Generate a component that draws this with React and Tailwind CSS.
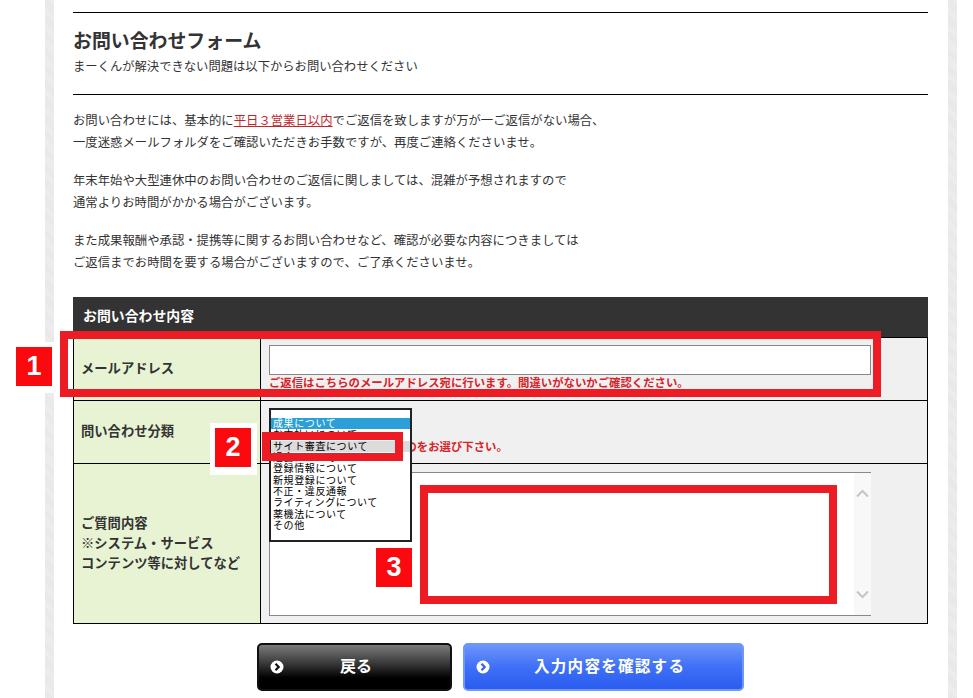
const categories = [
  { label: '成果について', active: true },
  { label: 'お支払いについて' },
  { label: 'サイト審査について', hover: true },
  { label: '退会について' },
  { label: '登録情報について' },
  { label: '新規登録について' },
  { label: '不正・違反通報' },
  { label: 'ライティングについて' },
  { label: '薬機法について' },
  { label: 'その他' },
]

const stripe = 'w-[9px] shrink-0 bg-[repeating-linear-gradient(45deg,#e6e6e6_0_1px,#efefef_1px_2px)]'

function Badge({ n, className }) {
  return (
    <div className={`absolute z-30 flex w-[36px] h-[39px] items-center justify-center bg-[#fa0a0f] text-[27px] font-bold text-white [font-family:'Liberation_Sans',sans-serif] ${className}`}>
      {n}
    </div>
  )
}

function ArrowIcon({ color }) {
  return (
    <svg width="14" height="14" viewBox="0 0 14 14" className="shrink-0">
      <circle cx="7" cy="7" r="6.5" fill="#fff" />
      <path d="M5.5 3.8 L8.7 7 L5.5 10.2" fill="none" stroke={color} strokeWidth="2.2" />
    </svg>
  )
}

export default function App() {
  return (
    <div className="relative h-[698px] w-[973px] overflow-hidden bg-white text-[#333] [font-family:'Liberation_Sans','Noto_Sans_CJK_JP',sans-serif]">
      <div className="ml-[45px] flex h-full w-[912px]">
        <div className={stripe} />
        <div className="flex-1 pl-[19px] pr-[20px] pt-[12px]">
          <div className="border-y border-black pt-[15px] pb-[16px]">
            <h2 className="text-[18.9px] font-bold leading-[28px] text-[#333]">お問い合わせフォーム</h2>
            <p className="text-[12.32px] leading-[22px]">まーくんが解決できない問題は以下からお問い合わせください</p>
          </div>

          <div className="mt-[15px] space-y-[16px] text-[12.37px] leading-[22px]">
            <p>
              お問い合わせには、基本的に<span className="text-[#c1272d] underline">平日３営業日以内</span>でご返信を致しますが万が一ご返信がない場合、<br />
              一度迷惑メールフォルダをご確認いただきお手数ですが、再度ご連絡くださいませ。
            </p>
            <p>
              年末年始や大型連休中のお問い合わせのご返信に関しましては、混雑が予想されますので<br />
              通常よりお時間がかかる場合がございます。
            </p>
            <p>
              また成果報酬や承認・提携等に関するお問い合わせなど、確認が必要な内容につきましては<br />
              ご返信までお時間を要する場合がございますので、ご了承くださいませ。
            </p>
          </div>

          <div className="mt-[23px] w-[855px] border-x border-b border-black">
            <div className="-mx-px flex h-[40px] items-center bg-[#333] px-[10px] pb-[2px] text-[13.9px] font-bold text-white">お問い合わせ内容</div>

            <div className="grid h-[63px] grid-cols-[187px_1fr] border-t border-black">
              <div className="flex items-center border-r border-black bg-[#e8f3d4] pl-[7px] text-[13.3px] font-bold">メールアドレス</div>
              <div className="bg-[#f0f0f0] pl-[8px] pt-[7px]">
                <div className="h-[30px] w-[602px] border border-[#888] bg-white" />
                <p className="mt-[1px] text-[11.39px] font-bold leading-[15px] text-[#d7232a]">ご返信はこちらのメールアドレス宛に行います。間違いがないかご確認ください。</p>
              </div>
            </div>

            <div className="grid h-[63px] grid-cols-[187px_1fr] border-t border-black">
              <div className="flex items-center border-r border-black bg-[#e8f3d4] pl-[7px] text-[13.3px] font-bold">問い合わせ分類</div>
              <div className="relative bg-[#f0f0f0] pl-[8px]">
                <p className="pt-[39px] text-[11.39px] font-bold leading-[15px] text-[#d7232a]">お問い合わせ内容に近いものをお選び下さい。</p>
                <ul className="absolute left-[8px] top-[7px] z-10 h-[134px] w-[143px] border-2 border-[#222] bg-white pt-[8px] text-[10px] leading-[11.35px] tracking-[0.6px] text-black">
                  {categories.map((c) => (
                    <li
                      key={c.label}
                      className={c.active ? 'bg-[#2a9fd8] pl-[2px] text-white' : c.hover ? 'bg-[#dcdcdc] pl-[2px]' : 'pl-[2px]'}
                    >
                      {c.label}
                    </li>
                  ))}
                </ul>
              </div>
            </div>

            <div className="grid h-[160px] grid-cols-[187px_1fr] border-t border-black">
              <div className="flex items-center border-r border-black bg-[#e8f3d4] pl-[7px] text-[13.3px] font-bold leading-[20px]">
                <p>ご質問内容<br />※システム・サービス<br />コンテンツ等に対してなど</p>
              </div>
              <div className="bg-[#f0f0f0] pl-[8px] pt-[8px]">
                <div className="flex h-[144px] w-[602px] justify-end border-y border-l border-[#888] bg-white">
                  <div className="flex w-[17px] flex-col items-center justify-between bg-[#f8f8f8] py-[16px]">
                    <svg width="13" height="9" viewBox="0 0 13 9"><path d="M1 7.5 L6.5 2 L12 7.5" fill="none" stroke="#c4c4c4" strokeWidth="2" /></svg>
                    <svg width="13" height="9" viewBox="0 0 13 9"><path d="M1 1.5 L6.5 7 L12 1.5" fill="none" stroke="#c4c4c4" strokeWidth="2" /></svg>
                  </div>
                </div>
              </div>
            </div>
          </div>

          <div className="mt-[19px] flex justify-center gap-[11px]">
            <button className="flex h-[48px] w-[195px] items-center rounded-[5px] border-2 border-[#111] bg-[linear-gradient(#7c7c7c,#333_45%,#000_75%,#000)] pl-[11px] text-white">
              <ArrowIcon color="#111" />
              <span className="ml-[47px] w-[50px] text-center text-[16px] font-bold">戻る</span>
            </button>
            <button className="flex h-[48px] w-[281px] items-center rounded-[5px] border-2 border-[#6f97f7] bg-[linear-gradient(#6d95fb,#3f70f6_50%,#2a5cf0)] pl-[11px] text-white">
              <ArrowIcon color="#2f62f0" />
              <span className="ml-[44px] text-[15.5px] font-bold tracking-[1.3px]">入力内容を確認する</span>
            </button>
          </div>
        </div>
        <div className={stripe} />
      </div>

      {/* 赤枠と番号 */}
      <div className="absolute left-[60px] top-[331px] z-20 h-[66px] w-[821px] border-[8px] border-[#ed1c24]" />
      <div className="absolute left-[262px] top-[432px] z-20 h-[29px] w-[141px] border-[8px] border-[#ed1c24]" />
      <div className="absolute left-[420px] top-[485px] z-20 h-[119px] w-[417px] border-[8px] border-[#ed1c24]" />
      <div className="absolute left-[11px] top-[342px] z-20 h-[51px] w-[49px] bg-white" />
      <div className="absolute left-[210px] top-[423px] z-20 h-[52px] w-[47px] bg-white" />
      <Badge n="1" className="left-[16px] top-[347px]" />
      <Badge n="2" className="left-[215px] top-[428px]" />
      <Badge n="3" className="left-[376px] top-[548px]" />
    </div>
  )
}
